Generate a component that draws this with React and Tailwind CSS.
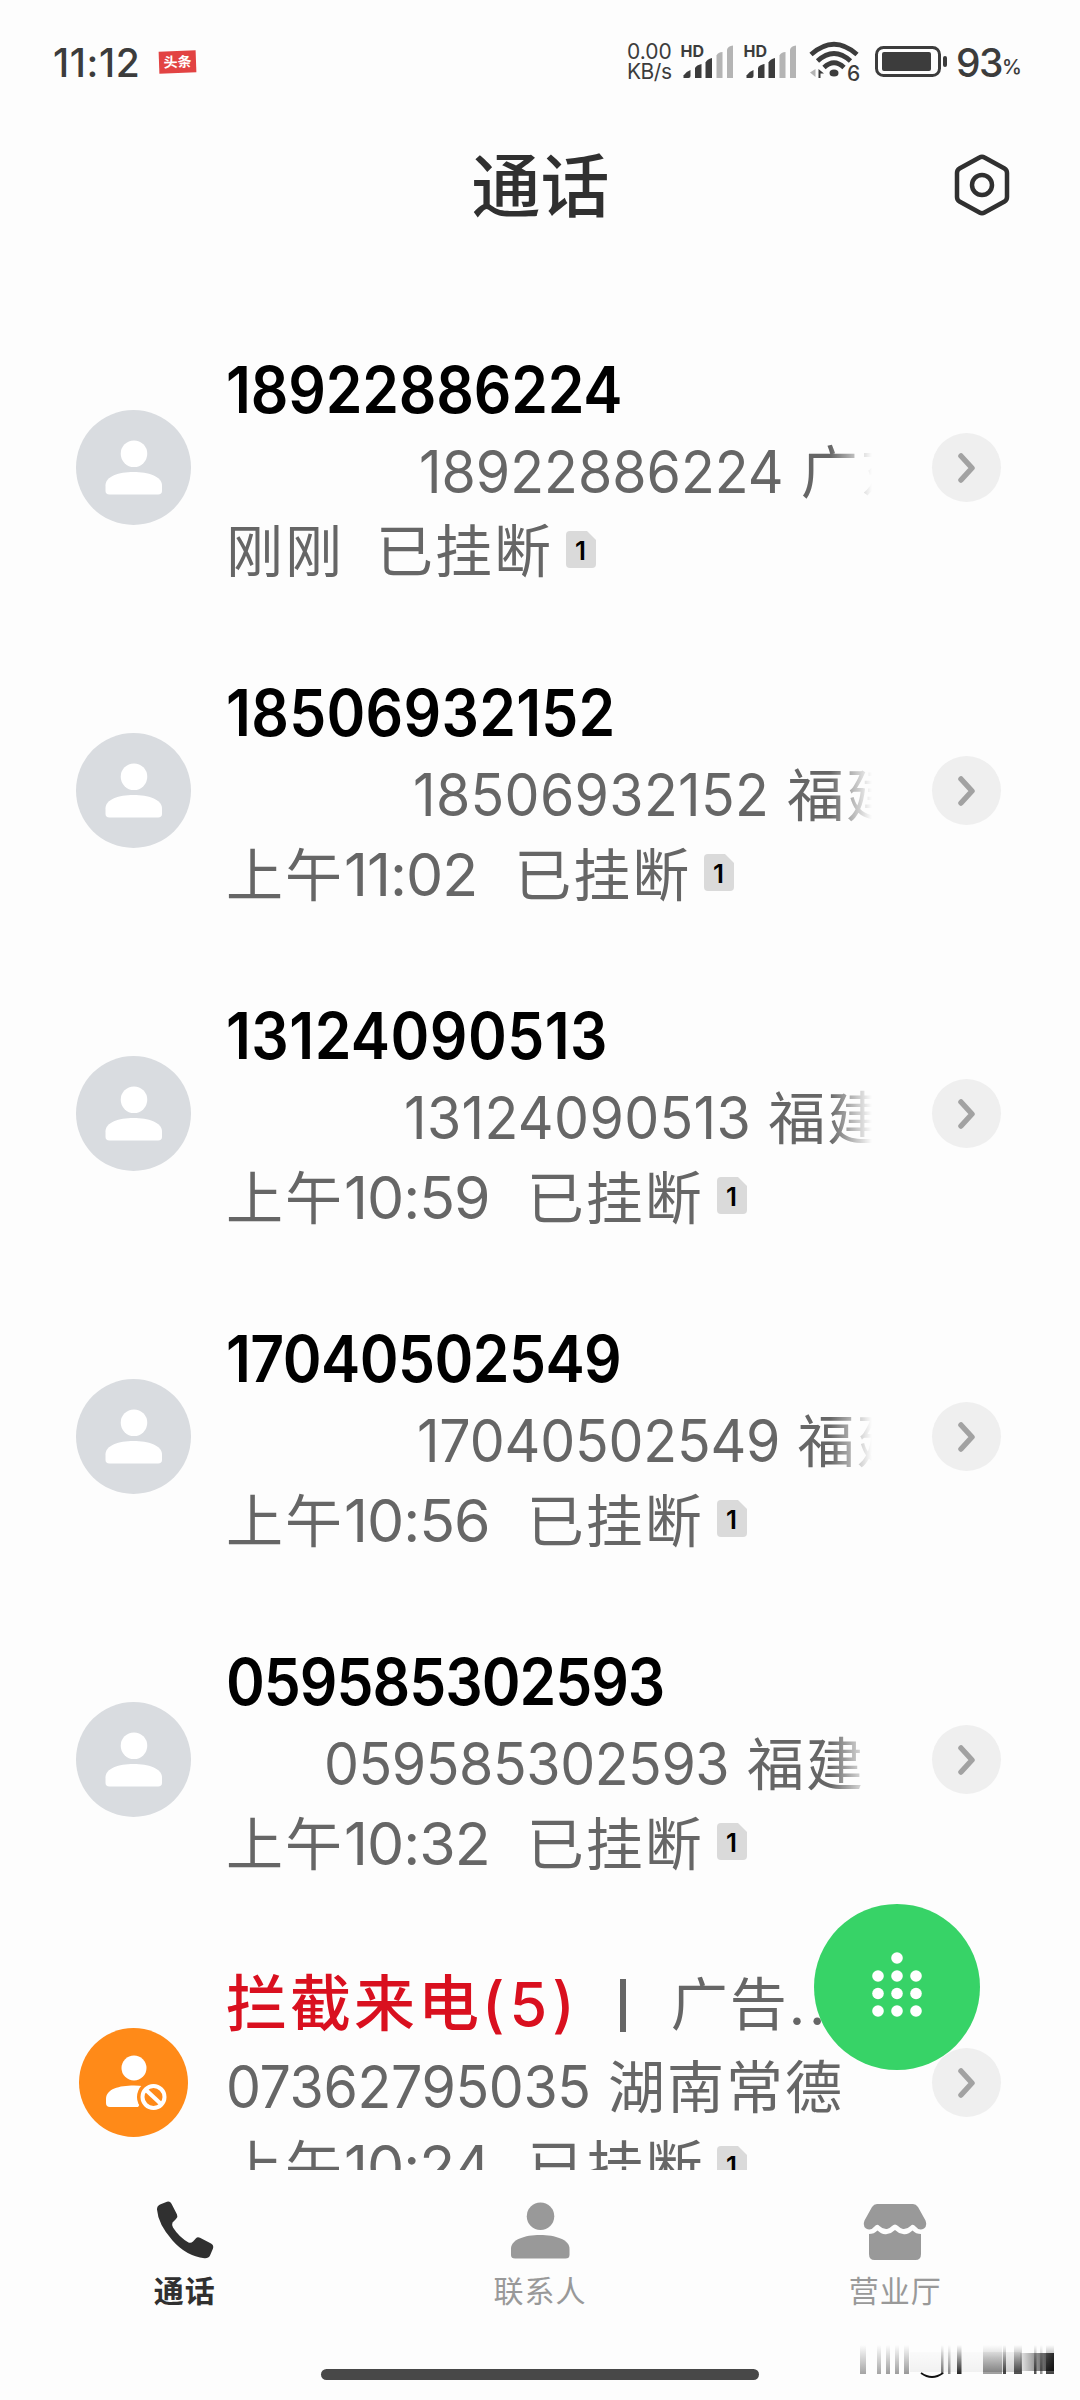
import React from "react";

const calls = [
  { id: 1, name: "18922886224", nameGap: "tracking-[-0.2px]", pad: "pl-[193px]", number: "18922886224", numGap: "tracking-[0px] mr-[-24px]", place: "广东", day: "刚刚", clock: "" },
  { id: 2, name: "18506932152", nameGap: "tracking-[0.3px]", pad: "pl-[187px]", number: "18506932152", numGap: "tracking-[0.35px] mr-[-23px]", place: "福建", day: "上午", clock: "11:02" },
  { id: 3, name: "13124090513", nameGap: "tracking-[0.5px]", pad: "pl-[178px]", number: "13124090513", numGap: "tracking-[0.4px] mr-[-23px]", place: "福建", day: "上午", clock: "10:59" },
  { id: 4, name: "17040502549", nameGap: "tracking-[-0.6px]", pad: "pl-[191px]", number: "17040502549", numGap: "tracking-[-0.2px] mr-[-24px]", place: "福建", day: "上午", clock: "10:56" },
  { id: 5, name: "059585302593", nameGap: "tracking-[-1.1px]", pad: "pl-[98px]", number: "059585302593", numGap: "tracking-[-0.45px] mr-[-26px]", place: "福建", day: "上午", clock: "10:32" },
  { id: 6, name: "拦截来电", count: "(5)", tag: "广告", blocked: true, pad: "pl-0", number: "07362795035", numGap: "tracking-[-0.4px] mr-[-24px]", place: "湖南常德", day: "上午", clock: "10:24" },
];

// x, width and darkness of the smudged strokes in the corner
const smudges = [
  [860, 6, 0.35], [877, 4, 0.35], [886, 4, 0.38], [895, 4, 0.38], [904, 5, 0.4],
  [941, 2.5, 0.55], [948, 2.5, 0.45], [957, 4.5, 0.85], [983, 19, 0.38], [1003, 3, 0.75],
  [1014, 8, 0.7], [1034, 2.5, 0.7], [1040, 2.5, 0.45], [1046, 8, 0.75],
];

function Signal() {
  return (
    <svg width="53" height="36" viewBox="0 0 53 36" className="shrink-0 overflow-visible">
      <text x="-0.5" y="13" fontSize="16" fontWeight="700" fill="#3c3c3c" fontFamily="Inter">HD</text>
      <path d="M2.500 34V31.500Q5 27.500 9.500 26V32Q9.500 34 7.500 34Z" fill="#3c3c3c" />
      <path d="M14 34V24Q15.500 21 20.500 20V34Z" fill="#3c3c3c" />
      <path d="M24.500 34V18.500Q26 15 31 14V34Z" fill="#3c3c3c" />
      <path d="M35.500 34V11.500Q37 8 41.500 8V34Z" fill="#b4b4b4" />
      <path d="M46 34V5.500Q47 2 52 1.500V34Z" fill="#b4b4b4" />
    </svg>
  );
}

function StatusBar() {
  return (
    <div className="flex h-[124px] items-center justify-between pl-[53px] pr-[60px] text-[#3c3c3c]">
      <div className="flex items-center gap-[19px]">
        <span className="text-[39px] font-medium leading-none tracking-[0.6px]">11:12</span>
        <span className="flex h-[22px] w-[37px] -rotate-2 items-center justify-center bg-[#e24343] text-[14px] font-bold leading-none text-white">头条</span>
      </div>
      <div className="flex items-center">
        <div className="mr-[9px] w-[45px] whitespace-nowrap text-[21px] leading-[20px]">
          <div>0.00</div>
          <div className="tracking-[-0.5px]">KB/s</div>
        </div>
        <Signal />
        <div className="w-2.5" />
        <Signal />
        <svg width="50" height="40" viewBox="0 0 50 40" className="ml-[13px] overflow-visible">
          <g fill="none" stroke="#3c3c3c" strokeWidth="4.800">
            <path d="M1 12.500Q24 -8 47 12.500" />
            <path d="M7.500 19Q24 4 40.500 19" />
            <path d="M14 25.500Q24 16 34 25.500" />
          </g>
          <ellipse cx="24" cy="31" rx="4.500" ry="3.500" fill="#3c3c3c" />
          <path d="M5.500 27V35L0 30.500Z" fill="#b4b4b4" />
          <path d="M8.500 36V27L14 31.500H10.500V36Z" fill="#3c3c3c" />
          <text x="37" y="39" fontSize="21" fontWeight="500" fill="#3c3c3c" fontFamily="Inter">6</text>
        </svg>
        <svg width="73" height="32" viewBox="0 0 73 32" className="ml-[15px]">
          <rect x="1.500" y="1.500" width="63" height="28" rx="7" fill="none" stroke="#3c3c3c" strokeWidth="3" />
          <rect x="7" y="6" width="49" height="19" rx="2" fill="#3c3c3c" />
          <rect x="68" y="10" width="4" height="11" rx="2" fill="#3c3c3c" />
        </svg>
        <span className="ml-[8px] text-[39px] font-medium leading-none tracking-[-1.5px]">93</span>
        <span className="mt-[9px] w-[18px] text-[20px] font-medium leading-none">%</span>
      </div>
    </div>
  );
}

function PersonShape({ className }) {
  return (
    <svg viewBox="0 0 58 56" className={className} fill="currentColor">
      <circle cx="29.500" cy="14" r="13.500" />
      <path d="M0.500 46C0.500 37 14 32.500 29 32.500S58 37 58 46V52Q58 55.500 54 55.500H4.500Q0.500 55.500 0.500 52Z" />
    </svg>
  );
}

function Avatar({ blocked }) {
  if (blocked) {
    return (
      <div className="mx-[3px] size-[109px] shrink-0 rounded-full bg-[#ff8a18]">
        <svg width="109" height="109" viewBox="0 0 109 109">
          <circle cx="55" cy="40" r="12.500" fill="#fff" />
          <path d="M27 71C27 61 40 57.500 55 57.500Q66 57.500 72 60L59 79H31Q27 79 27 75Z" fill="#fff" />
          <circle cx="74.500" cy="69" r="16.500" fill="#ff8a18" />
          <circle cx="74.500" cy="69" r="11" fill="none" stroke="#fff" strokeWidth="4" />
          <path d="M67 62L82 76" stroke="#fff" strokeWidth="4" />
        </svg>
      </div>
    );
  }
  return (
    <div className="flex size-[115px] shrink-0 items-center justify-center rounded-full bg-[#d9dce0]">
      <PersonShape className="h-[55px] w-[57px] text-white" />
    </div>
  );
}

function SimBadge() {
  return (
    <svg width="30" height="37" viewBox="0 0 30 37" className="-mt-[3px] ml-[13px] shrink-0">
      <path d="M4 0H21L30 9V33Q30 37 26 37H4Q0 37 0 33V4Q0 0 4 0Z" fill="#dadada" />
      <text x="14.500" y="28.500" textAnchor="middle" fontSize="26" fontWeight="600" fill="#000" fontFamily="Inter">1</text>
    </svg>
  );
}

function CallRow({ call }) {
  return (
    <div className="flex h-[323px] shrink-0 items-center pl-[76px] pr-[79px]">
      <Avatar blocked={call.blocked} />
      <div className="ml-[35px] w-[646px] whitespace-nowrap pt-[5px] text-[#666]">
        {call.blocked ? (
          <div className="flex h-[82px] items-center">
            <span className="text-[61px] font-medium text-[#d9101f]">
              <span className="tracking-[3px]">{call.name}</span>
              <span className="tracking-[5px]">{call.count}</span>
            </span>
            <span className="ml-[40px] h-[53px] w-[6px] bg-[#666]" />
            <span className="ml-[45px] text-[57px] tracking-[2px]">
              {call.tag}
              <span className="tracking-[4px]">...</span>
            </span>
          </div>
        ) : (
          <div className={`flex h-[82px] origin-left scale-x-[0.92] items-center text-[64px] font-semibold text-black ${call.nameGap}`}>{call.name}</div>
        )}
        <div className={`flex h-20 items-center ${call.blocked ? "" : "overflow-hidden [mask-image:linear-gradient(to_right,#000_604px,transparent_646px)]"} ${call.pad}`}>
          <div className="flex items-baseline leading-none">
            <span className={`origin-left scale-x-[0.94] text-[59px] ${call.numGap}`}>{call.number}</span>
            <span className="ml-[18px] text-[57px] tracking-[2px]">{call.place}</span>
          </div>
        </div>
        <div className="flex h-20 items-center">
          <div className="flex items-baseline leading-none">
            <span className="text-[57px] tracking-[2px]">{call.day}</span>
            {call.clock ? (
              <span className="mr-[37px] text-[59px] tracking-[-1px]">{call.clock}</span>
            ) : (
              <span className="mr-[32px]" />
            )}
            <span className="text-[57px] tracking-[2px]">已挂断</span>
          </div>
          <SimBadge />
        </div>
      </div>
      <div className="ml-auto flex size-[69px] shrink-0 items-center justify-center rounded-full bg-[#efefef]">
        <svg width="17" height="30" viewBox="0 0 17 30" fill="none" stroke="#a2a2a2" strokeWidth="5.500" strokeLinecap="round" strokeLinejoin="round">
          <path d="M3 3L14 15L3 27" />
        </svg>
      </div>
    </div>
  );
}

function PhoneIcon() {
  return (
    <svg width="58" height="58" viewBox="0 0 58 58" fill="#303030">
      <path d="M4 3.500L11 0.800Q14 0 15.500 2.800L21 13.500Q22.200 16 20 18L16.500 21.500Q15.500 24 17 26.500Q23 36 32.500 41.500Q35 42.500 37 40.500L40 37.200Q41.500 35.700 44 36.800L55 42.500Q58 44.200 57 47.500L54 54.500Q52.500 57.500 48.500 57.200Q30 55 16.500 39.500Q2 23 1 8.500Q0.800 5 4 3.500Z" />
    </svg>
  );
}

function StoreIcon() {
  return (
    <svg width="64" height="56" viewBox="0 0 64 56" fill="#999" className="mt-[3px]">
      <path d="M14 0H50Q53 0 55 3L62.500 16.500Q64.500 22 61 24.500Q56 27 52.500 22.500Q50 19.500 47.500 22Q44 25.500 40 25Q37.500 24.500 35 22Q32 19 29 22Q26.500 24.500 24 25Q20 25.500 16.500 22Q14 19.500 11.500 22.500Q8 27 3 24.500Q-0.500 22 1.500 16.500L9 3Q11 0 14 0Z" />
      <path d="M6 30Q11 30 14.500 26.500Q19 31 24 30Q28.500 29.500 32 26Q35.500 29.500 40 30Q45 31 49.500 26.500Q53 30 58 30V50Q58 56 52.500 56H11.500Q6 56 6 50Z" />
    </svg>
  );
}

function NavItem({ icon, label, active }) {
  return (
    <div className={`flex flex-1 flex-col items-center ${active ? "font-bold text-[#303030]" : "text-[#999]"}`}>
      <div className="flex h-[60px] items-center">{icon}</div>
      <span className="mt-[13px] text-[30px] leading-[36px] tracking-[1px]">{label}</span>
    </div>
  );
}

export default function App() {
  return (
    <div className="relative flex h-[2400px] w-[1080px] flex-col overflow-hidden bg-[#fdfdfd] font-[Inter,'Noto_Sans_CJK_SC',sans-serif]">
      <StatusBar />
      <header className="flex h-[122px] items-center justify-between pl-[70px] pr-[69px]">
        <div className="w-[58px]" />
        <h1 className="pt-1 text-[69px] font-medium leading-none text-[#303030]">通话</h1>
        <svg width="58" height="62" viewBox="0 0 58 62" fill="none" stroke="#303030" strokeWidth="4.500">
          <path d="M26.500 3.500Q29 2 31.500 3.500L51.500 14.500Q54 16 54 19V43Q54 46 51.500 47.500L31.500 58.500Q29 60 26.500 58.500L6.500 47.500Q4 46 4 43V19Q4 16 6.500 14.500Z" />
          <circle cx="29" cy="31" r="10" />
        </svg>
      </header>

      <main className="flex h-[1924px] flex-col overflow-hidden pt-[60px]">
        {calls.map((call) => (
          <CallRow key={call.id} call={call} />
        ))}
      </main>

      <nav className="flex h-[199px] px-[7px] pt-[30px]">
        <NavItem icon={<PhoneIcon />} label="通话" active />
        <NavItem icon={<PersonShape className="h-[57px] w-[60px]" />} label="联系人" />
        <NavItem icon={<StoreIcon />} label="营业厅" />
      </nav>
      <div className="h-[11px] w-[438px] self-center rounded-full bg-[#484848]" />

      <button className="absolute left-[814px] top-[1904px] size-[166px] rounded-full bg-[#37d367]">
        <svg width="166" height="166" viewBox="0 0 166 166" fill="#fff">
          <circle cx="83" cy="54" r="5.800" />
          {[72, 89.500, 107].map((y) =>
            [64, 83, 102].map((x) => <circle key={`${x}-${y}`} cx={x} cy={y} r="5.800" />)
          )}
        </svg>
      </button>

      <svg width="240" height="60" viewBox="840 2330 240 60" className="absolute left-[840px] top-[2330px]">
        <defs>
          <linearGradient id="fade" x1="0" y1="2345" x2="0" y2="2374" gradientUnits="userSpaceOnUse">
            <stop offset="0" stopColor="#000" stopOpacity="0" />
            <stop offset="1" stopColor="#000" />
          </linearGradient>
          <linearGradient id="edge" x1="1020" y1="0" x2="1054" y2="0" gradientUnits="userSpaceOnUse">
            <stop offset="0" stopColor="#000" stopOpacity="0.08" />
            <stop offset="1" stopColor="#000" stopOpacity="0.8" />
          </linearGradient>
        </defs>
        <rect x="910" y="2352" width="73" height="20" fill="url(#fade)" opacity="0.05" />
        <rect x="983" y="2352" width="38" height="20" fill="url(#fade)" opacity="0.2" />
        <rect x="1020" y="2353" width="34" height="18" fill="url(#edge)" />
        {smudges.map(([x, w, o]) => (
          <rect key={x} x={x} y="2345" width={w} height="29" fill="url(#fade)" opacity={o} />
        ))}
        <path d="M921 2373Q932 2381 943 2373" fill="none" stroke="#111" strokeWidth="1.800" />
      </svg>
    </div>
  );
}
